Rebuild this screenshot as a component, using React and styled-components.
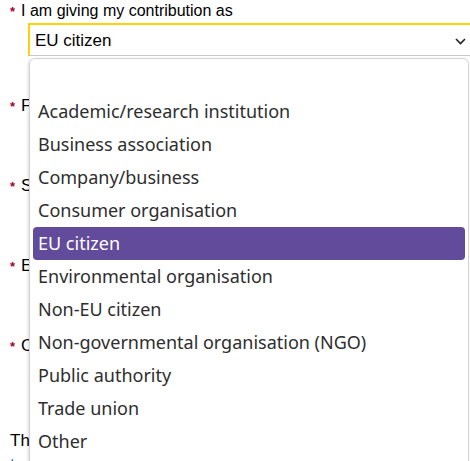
import React from 'react'
import styled, { createGlobalStyle } from 'styled-components'

const GlobalStyle = createGlobalStyle`
  html, body {
    margin: 0;
    padding: 0;
    background: #fff;
    overflow: hidden;
  }
  body {
    font-family: 'Liberation Sans', Arial, sans-serif;
    color: #000;
  }
`

const Page = styled.div`
  width: 470px;
  height: 461px;
  padding: 2px 0 0 10px;
  box-sizing: border-box;
  position: relative;
`

const Field = styled.div`
  margin-bottom: ${(p) => p.gap || 23}px;
`

const Label = styled.div`
  display: flex;
  align-items: baseline;
  gap: 6px;
  font-size: ${(p) => p.size || 16}px;
  line-height: 18px;
  white-space: nowrap;
`

const Req = styled.span`
  color: #a4001f;
  font-size: 13px;
  font-weight: bold;
`

const SelectWrap = styled.div`
  position: relative;
  margin: 2px 0 0 18px;
`

const SelectBox = styled.div`
  height: 33px;
  width: 460px;
  box-sizing: border-box;
  border-top: 2px solid #fcd20b;
  border-left: 2px solid #fcd20b;
  border-bottom: 1px solid #c8c8c8;
  display: flex;
  align-items: center;
  padding: 1px 0 0 5px;
  font-size: 17px;
`

const Chevron = styled.svg`
  position: absolute;
  left: 427px;
  top: 15px;
`

const Input = styled.div`
  width: 400px;
  height: 34px;
  margin: 2px 0 0 24px;
  border: 1px solid #999;
`

const Dropdown = styled.ul`
  position: absolute;
  top: 35px;
  left: 1px;
  width: 432px;
  height: 420px;
  margin: 0;
  padding: 3px 3px 0 3px;
  list-style: none;
  background: #fff;
  border: 1px solid #d4d4d4;
  border-radius: 6px 6px 0 0;
  box-shadow: -1px 1px 3px rgba(0, 0, 0, 0.15);
  font-family: 'Noto Sans', 'Open Sans', sans-serif;
  font-size: 18px;
  color: #2e2e2e;
  z-index: 5;
`

const Option = styled.li`
  height: 33px;
  line-height: 33px;
  padding-left: 5px;
  border-radius: 4px;
  white-space: nowrap;
  background: ${(p) => (p.active ? '#634b9b' : 'transparent')};
  color: ${(p) => (p.active ? '#fff' : 'inherit')};
`

const Text = styled.p`
  margin: 0;
  padding-top: 12px;
  font-size: 17px;
  line-height: 24px;
`

const Link = styled.span`
  color: #1a6fd1;
`

const options = [
  '',
  'Academic/research institution',
  'Business association',
  'Company/business',
  'Consumer organisation',
  'EU citizen',
  'Environmental organisation',
  'Non-EU citizen',
  'Non-governmental organisation (NGO)',
  'Public authority',
  'Trade union',
  'Other',
]

const fields = ['First name', 'Surname', 'Email (this will not be published)', 'Country of origin']

const App = () => {
  return (
    <Page>
      <GlobalStyle />
      <Field gap={41}>
        <Label size={16}>
          <Req>*</Req>
          I am giving my contribution as
        </Label>
        <SelectWrap>
          <SelectBox>EU citizen</SelectBox>
          <Chevron width="11" height="7" viewBox="0 0 11 7">
            <path d="M1 1l4.5 4.5L10 1" fill="none" stroke="#222" strokeWidth="1.6" />
          </Chevron>
          <Dropdown>
            {options.map((o, i) => (
              <Option key={i} active={o === 'EU citizen'}>
                {o}
              </Option>
            ))}
          </Dropdown>
        </SelectWrap>
      </Field>
      {fields.map((f) => (
        <Field key={f}>
          <Label size={17}>
            <Req>*</Req>
            {f}
          </Label>
          <Input />
        </Field>
      ))}
      <Text>
        The information you provide here will be used
        <br />
        <Link>to</Link> process your contribution.
      </Text>
    </Page>
  )
}

export default App
